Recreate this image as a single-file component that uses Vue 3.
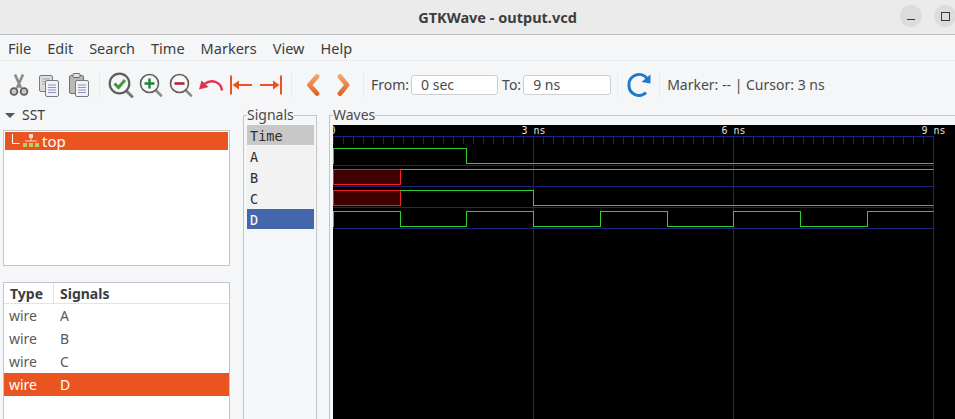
<script setup>
// GTKWave window: signal data drives the lists and the wave canvas
const ORIGIN = 333
const NS = 66.72
const END = 933

const xAt = (ns) => Math.round(ORIGIN + ns * NS) + 0.5

const signalNames = ['A', 'B', 'C', 'D']

const menus = ['File', 'Edit', 'Search', 'Time', 'Markers', 'View', 'Help']

// level lists: [start ns, value], value x = undefined
const traces = [
  { top: 148, levels: [[0, 1], [2, 0]] },
  { top: 169, levels: [[0, 'x'], [1, 1]] },
  { top: 190, levels: [[0, 'x'], [1, 1], [3, 0]] },
  { top: 211, levels: [[0, 1], [1, 0], [2, 1], [3, 0], [4, 1], [5, 0], [6, 1], [7, 0], [8, 1]] }
]

const ROW_H = 15

const tracePath = (trace) => {
  let d = ''
  trace.levels.forEach(([start, value], i) => {
    if (value === 'x') return
    const y = trace.top + 0.5 + (value ? 0 : ROW_H)
    const x = xAt(start)
    const next = trace.levels[i + 1]
    const endX = next ? xAt(next[0]) : END + 0.5
    d += d ? ` L${x} ${y}` : ` M${x} ${y}`
    d += ` L${endX} ${y}`
  })
  return d
}

const unknownEnd = (trace) => {
  const i = trace.levels.findIndex(([, v]) => v === 'x')
  return i < 0 ? null : xAt(trace.levels[i + 1][0])
}

// vertical edges between two known levels, the edge out of x is drawn by its box
const edges = (trace) =>
  trace.levels.slice(1).filter((_, i) => trace.levels[i][1] !== 'x').map(([start]) => xAt(start))

const ticks = Array.from({ length: 61 }, (_, i) => Math.round(ORIGIN + i * 10.005) + 0.5)
const majors = [3, 6, 9].map(xAt)
const labels = [
  { n: '3', at: 3 },
  { n: '6', at: 6 },
  { n: '9', at: 9 }
]
</script>

<template>
  <div class="window">
    <header class="titlebar">
      <span class="title">GTKWave - output.vcd</span>
      <span class="win-btn min"><i></i></span>
      <span class="win-btn max"><i></i></span>
    </header>

    <nav class="menubar">
      <span v-for="m in menus" :key="m">{{ m }}</span>
    </nav>

    <div class="toolbar">
      <!-- cut -->
      <span class="tool"><svg width="24" height="24" viewBox="0 0 24 24">
        <path d="M8 1.5 L14 15 M16 1.5 L10 15" stroke="#8b8b88" stroke-width="2.6" fill="none" />
        <circle cx="7" cy="18.5" r="3.4" fill="#c8c8c4" stroke="#5e5e5c" stroke-width="1.8" />
        <circle cx="17" cy="18.5" r="3.4" fill="#c8c8c4" stroke="#5e5e5c" stroke-width="1.8" />
      </svg></span>
      <!-- copy -->
      <span class="tool"><svg width="24" height="24" viewBox="0 0 24 24">
        <rect x="2.5" y="2.5" width="13" height="16" rx="1.5" fill="#dcdcdc" stroke="#77797a" />
        <path d="M5 6h8M5 8.5h8M5 11h8" stroke="#a5a5a5" />
        <rect x="8.5" y="7.5" width="13" height="16" rx="1.5" fill="#f3f3f6" stroke="#77797a" />
        <path d="M11 12h8M11 14.5h8M11 17h8M11 19.5h8" stroke="#8f8fc8" />
      </svg></span>
      <!-- paste -->
      <span class="tool"><svg width="24" height="24" viewBox="0 0 24 24">
        <rect x="2.5" y="2.5" width="14" height="18" rx="1.5" fill="#b9b9b6" stroke="#6e6e6c" />
        <rect x="6" y="0.5" width="7" height="4" rx="1" fill="#e2e2e0" stroke="#6e6e6c" />
        <rect x="8.5" y="7.5" width="13" height="16" rx="1.5" fill="#f3f3f6" stroke="#77797a" />
        <path d="M11 12h8M11 14.5h8M11 17h8M11 19.5h8" stroke="#8f8fc8" />
      </svg></span>
      <span class="sep"></span>
      <!-- zoom fit -->
      <span class="tool"><svg width="26" height="26" viewBox="0 0 26 26">
        <path d="M18 18.5 L24 24.5" stroke="#77797a" stroke-width="3" stroke-linecap="round" />
        <circle cx="11.5" cy="11.5" r="9.8" fill="#f5f6f5" stroke="#5d5f5c" stroke-width="2.2" />
        <path d="M6.5 11.5 L10.5 15.5 L17 8" stroke="#3f9b3a" stroke-width="3" fill="none" />
      </svg></span>
      <!-- zoom in -->
      <span class="tool"><svg width="24" height="24" viewBox="0 0 24 24">
        <path d="M16.5 17 L22 22.5" stroke="#8a8c8a" stroke-width="2.6" stroke-linecap="round" />
        <circle cx="10.5" cy="10.5" r="9" fill="#f7f8f7" stroke="#5d5f5c" stroke-width="1.6" />
        <path d="M10.5 5.5v10M5.5 10.5h10" stroke="#1c8434" stroke-width="2.4" />
      </svg></span>
      <!-- zoom out -->
      <span class="tool"><svg width="24" height="24" viewBox="0 0 24 24">
        <path d="M16.5 17 L22 22.5" stroke="#8a8c8a" stroke-width="2.6" stroke-linecap="round" />
        <circle cx="10.5" cy="10.5" r="9" fill="#f7f8f7" stroke="#5d5f5c" stroke-width="1.6" />
        <path d="M5.5 10.5h10" stroke="#a82a42" stroke-width="2.6" />
      </svg></span>
      <!-- undo zoom -->
      <span class="tool"><svg width="26" height="24" viewBox="0 0 26 24">
        <path d="M24 17.5 C23 9 14 5.5 6.5 11" stroke="#e8304e" stroke-width="2.4" fill="none" />
        <path d="M1 16.5 L3.5 7.5 L10.5 14 Z" fill="#e8304e" />
      </svg></span>
      <!-- to start -->
      <span class="tool"><svg width="24" height="24" viewBox="0 0 24 24">
        <path d="M2 2.5v19" stroke="#e95420" stroke-width="2" />
        <path d="M8 12h15" stroke="#e95420" stroke-width="2" />
        <path d="M3.5 12 L10 7.5v9Z" fill="#e95420" />
      </svg></span>
      <!-- to end -->
      <span class="tool"><svg width="24" height="24" viewBox="0 0 24 24">
        <path d="M22 2.5v19" stroke="#e95420" stroke-width="2" />
        <path d="M1 12h15" stroke="#e95420" stroke-width="2" />
        <path d="M20.5 12 L14 7.5v9Z" fill="#e95420" />
      </svg></span>
      <span class="sep"></span>
      <!-- shift left -->
      <span class="tool"><svg width="16" height="22" viewBox="0 0 16 22">
        <defs>
          <linearGradient id="chev" x1="0" y1="0" x2="0" y2="22" gradientUnits="userSpaceOnUse">
            <stop offset="0" stop-color="#f3ab72" />
            <stop offset="1" stop-color="#df5f1e" />
          </linearGradient>
        </defs>
        <path d="M12 2.5 L4.5 11 L12 19.5" stroke="url(#chev)" stroke-width="4.8" fill="none" stroke-linecap="round" stroke-linejoin="round" />
      </svg></span>
      <!-- shift right -->
      <span class="tool"><svg width="16" height="22" viewBox="0 0 16 22">
        <path d="M5 2.5 L12 11 L5 19.5" stroke="url(#chev)" stroke-width="4.8" fill="none" stroke-linecap="round" stroke-linejoin="round" />
      </svg></span>
      <span class="sep wide"></span>

      <label class="field-label">From:</label>
      <span class="entry from">0 sec</span>
      <label class="field-label to-label">To:</label>
      <span class="entry to">9 ns</span>
      <span class="sep after-to"></span>
      <!-- reload -->
      <span class="tool reload"><svg width="26" height="26" viewBox="0 0 26 26">
        <path d="M21 6.5 A10 10 0 0 0 3 13 A10 10 0 0 0 20 20.5" stroke="#1f78c8" stroke-width="3" fill="none" />
        <path d="M24.5 2.5 L24.5 11.5 L15.5 10 Z" fill="#1f78c8" />
      </svg></span>
      <span class="sep after-reload"></span>
      <span class="status">Marker: -- | Cursor: 3 ns</span>
    </div>

    <main class="panes">
      <section class="left-pane">
        <div class="sst-head"><i class="caret"></i>SST</div>
        <div class="tree-box">
          <div class="tree-row">
            <svg class="tree-line" width="11" height="16" viewBox="0 0 11 16">
              <path d="M3.5 1v9.5h7" stroke="#fff" fill="none" />
            </svg>
            <svg width="18" height="16" viewBox="0 0 18 16">
              <rect x="7" y="1" width="4" height="4" fill="#f3d9d0" />
              <path d="M9 5v3M3 8h12" stroke="#f3d9d0" />
              <rect x="1" y="10" width="4" height="4" fill="#b7cf6a" />
              <rect x="7" y="10" width="4" height="4" fill="#b7cf6a" />
              <rect x="13" y="10" width="4" height="4" fill="#b7cf6a" />
            </svg>
            <span>top</span>
          </div>
        </div>

        <div class="list-box">
          <div class="list-head">
            <span class="col-type">Type</span>
            <span class="col-name">Signals</span>
          </div>
          <div
            v-for="s in signalNames"
            :key="s"
            class="list-row"
            :class="{ selected: s === 'D' }"
          >
            <span class="col-type">wire</span>
            <span class="col-name">{{ s }}</span>
          </div>
        </div>
      </section>

      <fieldset class="signals-frame">
        <legend>Signals</legend>
        <div class="sig time">Time</div>
        <div
          v-for="s in signalNames"
          :key="s"
          class="sig"
          :class="{ active: s === 'D' }"
        >{{ s }}</div>
      </fieldset>

      <fieldset class="waves-frame">
        <legend>Waves</legend>
        <svg class="canvas" width="622" height="294" viewBox="333 125 622 294">
          <rect x="333" y="125" width="622" height="294" fill="#000" />
          <!-- time ruler -->
          <text x="329.5" y="134" class="ruler">0</text>
          <template v-for="l in labels" :key="l.n">
            <text :x="xAt(l.at) - 12" y="134" class="ruler">{{ l.n }}</text>
            <text :x="xAt(l.at)" y="134" class="ruler">ns</text>
          </template>
          <path d="M333 136.5H934" class="grid" />
          <path v-for="t in ticks" :key="t" :d="`M${t} 136V144`" class="grid" />
          <path v-for="m in majors" :key="m" :d="`M${m} 136V419`" class="grid" />
          <!-- traces -->
          <template v-for="tr in traces" :key="tr.top">
            <path :d="`M333 ${tr.top + 17.5}H934`" class="grid" />
            <rect
              v-if="unknownEnd(tr)"
              x="333.5"
              :y="tr.top + 0.5"
              :width="unknownEnd(tr) - 333.5"
              :height="ROW_H"
              class="unknown"
            />
            <path :d="tracePath(tr)" class="trace" />
            <path
              v-if="!unknownEnd(tr)"
              :d="`M333.5 ${tr.top}V${tr.top + ROW_H + 1}`"
              class="trace"
            />
            <path
              v-for="x in edges(tr)"
              :key="x"
              :d="`M${x} ${tr.top}V${tr.top + ROW_H + 1}`"
              class="trace"
            />
          </template>
        </svg>
      </fieldset>
    </main>
  </div>
</template>

<style>
html,
body {
  margin: 0;
  background: #f5f6f7;
  overflow: hidden;
}
</style>

<style scoped>
.window {
  width: 955px;
  height: 419px;
  overflow: hidden;
  display: flex;
  flex-direction: column;
  background: #f5f6f7;
  color: #3d3d3d;
  font-family: "Noto Sans", "Open Sans", sans-serif;
  font-size: 14px;
}

.titlebar {
  position: relative;
  flex: 0 0 34px;
  display: flex;
  align-items: center;
  justify-content: center;
  padding-left: 40px;
  background: #ebebeb;
  border-bottom: 1px solid #bdbdbd;
}

.title {
  font-size: 14.5px;
  font-weight: 700;
  color: #3d3d3d;
}

.win-btn {
  position: absolute;
  top: 5px;
  width: 22px;
  height: 22px;
  border-radius: 50%;
  background: #dcdcdc;
  display: flex;
  align-items: center;
  justify-content: center;
}

.win-btn.min { left: 900px; }
.win-btn.max { left: 934px; }

.win-btn.min i {
  width: 8px;
  height: 1px;
  margin-top: 7px;
  background: #3d3d3d;
}

.win-btn.max i {
  width: 7px;
  height: 7px;
  border: 1px solid #3d3d3d;
}

.menubar {
  flex: 0 0 25px;
  display: flex;
  align-items: center;
  gap: 16px;
  padding-left: 8px;
  border-bottom: 1px solid #eceded;
  font-size: 14.5px;
}

.toolbar {
  flex: 0 0 39px;
  box-sizing: border-box;
  display: flex;
  align-items: center;
  padding: 8px 0 0 4px;
  font-size: 14px;
}

.tool {
  flex: 0 0 30px;
  height: 30px;
  display: flex;
  align-items: center;
  justify-content: center;
}

.sep {
  flex: 0 0 12px;
  height: 26px;
  position: relative;
}

.sep::after {
  content: "";
  position: absolute;
  left: 5px;
  top: 0;
  bottom: 0;
  width: 1px;
  background: #eaebec;
}

.sep.wide { flex-basis: 13px; }

.field-label { margin-right: 2px; color: #4a4a4a; }

.to-label { margin-left: 4px; }

.entry {
  box-sizing: border-box;
  height: 20px;
  line-height: 17px;
  background: #fff;
  border: 1px solid #cdcfd1;
  border-radius: 3px;
  padding-left: 9px;
  color: #4a4a4a;
}

.entry.from { width: 87px; }
.entry.to { width: 88px; }

.sep.after-to { margin-left: 1px; }

.sep.after-reload { flex-basis: 10px; }

.status { margin-left: 3px; color: #4a4a4a; }

.panes {
  flex: 1;
  display: flex;
  min-height: 0;
}

.left-pane {
  flex: 0 0 243px;
  padding-left: 3px;
  box-sizing: border-box;
}

.sst-head {
  height: 30px;
  display: flex;
  align-items: center;
  padding-left: 2px;
  font-size: 14px;
  line-height: 1;
}

.caret {
  width: 0;
  height: 0;
  margin-right: 7px;
  border-left: 5px solid transparent;
  border-right: 5px solid transparent;
  border-top: 5px solid #555;
}

.tree-box {
  box-sizing: border-box;
  width: 227px;
  height: 136px;
  background: #fff;
  border: 1px solid #c3c5c8;
  padding: 1px;
}

.tree-row {
  height: 18px;
  display: flex;
  align-items: center;
  gap: 2px;
  padding-left: 1px;
  background: #e95420;
  color: #fff;
  font-size: 15px;
}

.tree-line { margin-left: 3px; }

.list-box {
  box-sizing: border-box;
  width: 227px;
  height: 200px;
  margin-top: 16px;
  background: #fff;
  border: 1px solid #c3c5c8;
}

.list-head {
  height: 20px;
  display: flex;
  align-items: center;
  font-weight: 700;
  color: #3d3d3d;
  border-bottom: 1px solid #e2e3e4;
}

.list-head .col-type {
  align-self: stretch;
  display: flex;
  align-items: center;
  border-right: 1px solid #e2e3e4;
}

.list-row {
  height: 23px;
  display: flex;
  align-items: center;
  color: #5a5a5a;
}

.list-row.selected {
  background: #e95420;
  color: #fff;
}

.col-type {
  box-sizing: border-box;
  width: 50px;
  padding-left: 5px;
}

.list-head .col-type { padding-left: 6px; }

.col-name { padding-left: 6px; }

fieldset {
  margin: 0;
  padding: 0;
  min-width: 0;
  border: 1px solid #c3c5c8;
  border-bottom: 0;
  box-sizing: border-box;
}

legend {
  padding: 0;
  margin-left: 0;
  font-size: 14px;
  line-height: 20px;
  color: #4a4a4a;
  background: #f5f6f7;
}

.signals-frame {
  flex: 0 0 74px;
  height: 320px;
  margin-top: 5px;
  padding: 0 2px 0 3px;
  border-right: 1px solid #c3c5c8;
}

.sig {
  height: 20px;
  margin-bottom: 1px;
  padding-left: 3px;
  font-family: "DejaVu Sans Mono", monospace;
  font-size: 13.5px;
  line-height: 22px;
  color: #2e2e2e;
  background: #f2f2f2;
}

.sig.time { background: #c8c8c8; }

.sig.active {
  background: #4466aa;
  color: #fff;
}

.waves-frame {
  flex: 0 0 626px;
  height: 320px;
  margin: 5px 0 0 12px;
  padding: 0 0 0 3px;
  border-right: 0;
  overflow: hidden;
}

.canvas { display: block; }

.ruler {
  font-family: "DejaVu Sans Mono", monospace;
  font-size: 10px;
  fill: #e2e2e2;
}

.grid {
  stroke: #20207e;
  stroke-width: 1;
  fill: none;
}

.trace {
  stroke: #2ecf2e;
  stroke-width: 1;
  fill: none;
}

.unknown {
  fill: #400000;
  stroke: #f02222;
  stroke-width: 1;
}
</style>
